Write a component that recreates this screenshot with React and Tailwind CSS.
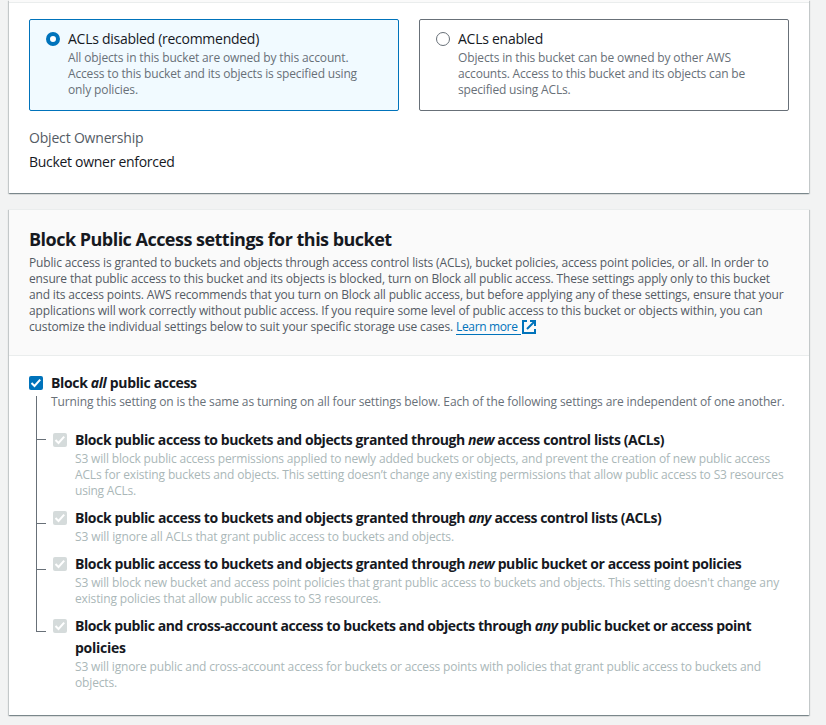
import React from "react";

// One line of copy with its own tracking.
function Line({ t = "tracking-[-0.15px]", children }) {
  return <span className={`block whitespace-nowrap ${t}`}>{children}</span>;
}

function Tile({ selected, title, titleTracking, children }) {
  return (
    <label
      className={`flex h-[92px] flex-1 gap-2 rounded-[2px] border px-4 pt-2 ${
        selected ? "border-[#0073bb] bg-[#f1faff]" : "border-[#687078] bg-white"
      }`}
    >
      {selected ? (
        <span className="mt-1 size-[14px] shrink-0 rounded-full border-4 border-[#0073bb] bg-white" />
      ) : (
        <span className="mt-1 size-[14px] shrink-0 rounded-full border border-[#687078] bg-white" />
      )}
      <span className="block">
        <span className={`block text-sm leading-[22px] font-medium whitespace-nowrap ${titleTracking}`}>{title}</span>
        <span className="block text-xs leading-4 text-[#687078]">{children}</span>
      </span>
    </label>
  );
}

function Check({ disabled }) {
  return (
    <svg viewBox="0 0 14 14" className="mt-1 size-[14px] shrink-0">
      <rect width="14" height="14" rx="2" fill={disabled ? "#d5dbdb" : "#0073bb"} />
      <path d="M2.5 7 5.5 10 11.2 3.6" fill="none" stroke="#fff" strokeWidth="2" />
    </svg>
  );
}

function Setting({ title, children }) {
  return (
    <div className="flex gap-2">
      <Check disabled />
      <div>
        <div className="text-sm leading-[22px] font-bold">{title}</div>
        <div className="text-xs leading-4 text-[#aab7b8]">{children}</div>
      </div>
    </div>
  );
}

const cardShadow =
  "shadow-[0_1px_1px_0_rgba(0,28,36,0.3),1px_1px_1px_0_rgba(0,28,36,0.15),-1px_1px_1px_0_rgba(0,28,36,0.15)]";

export default function App() {
  return (
    <div className="h-[725px] w-full overflow-hidden bg-[#f2f3f3] pr-[17px] pl-[9px] font-['Open_Sans',sans-serif] text-[#16191f]">
      <section className={`h-[193px] bg-white ${cardShadow}`}>
        <div className="h-[3px] border-b border-[#eaeded] bg-[#fafafa]" />
        <div className="px-5 pt-4">
          <div className="flex gap-5">
            <Tile selected title="ACLs disabled (recommended)" titleTracking="tracking-[-0.272px]">
              <Line t="tracking-[-0.139px]">All objects in this bucket are owned by this account.</Line>
              <Line t="tracking-[-0.159px]">Access to this bucket and its objects is specified using</Line>
              <Line t="tracking-[-0.125px]">only policies.</Line>
            </Tile>
            <Tile title="ACLs enabled" titleTracking="tracking-[-0.254px]">
              <Line t="tracking-[-0.14px]">Objects in this bucket can be owned by other AWS</Line>
              <Line t="tracking-[-0.177px]">accounts. Access to this bucket and its objects can be</Line>
              <Line t="tracking-[-0.178px]">specified using ACLs.</Line>
            </Tile>
          </div>
          <div className="mt-4 text-sm leading-[22px] tracking-[-0.185px] text-[#545b64]">Object Ownership</div>
          <div className="mt-0.5 text-sm leading-[22px] font-medium tracking-[-0.295px]">Bucket owner enforced</div>
        </div>
      </section>

      <section className={`mt-4 h-[506px] border-t border-[#eaeded] bg-white ${cardShadow}`}>
        <header className="h-[146px] border-b border-[#eaeded] bg-[#fafafa] px-5 pt-[18px]">
          <h2 className="text-lg leading-[22px] font-bold tracking-[-0.52px]">
            Block Public Access settings for this bucket
          </h2>
          <div className="mt-[5px] text-xs leading-4 text-[#545b64]">
            <Line t="tracking-[-0.159px]">
              Public access is granted to buckets and objects through access control lists (ACLs), bucket policies, access point policies, or all. In order to
            </Line>
            <Line t="tracking-[-0.142px]">
              ensure that public access to this bucket and its objects is blocked, turn on Block all public access. These settings apply only to this bucket
            </Line>
            <Line t="tracking-[-0.158px]">
              and its access points. AWS recommends that you turn on Block all public access, but before applying any of these settings, ensure that your
            </Line>
            <Line t="tracking-[-0.141px]">
              applications will work correctly without public access. If you require some level of public access to this bucket or objects within, you can
            </Line>
            <div className="flex">
              <Line t="tracking-[-0.141px]">customize the individual settings below to suit your specific storage use cases.</Line>
              <a className="ml-[3px] flex h-[16px] text-[#0073bb]">
                <span className="h-4 w-[65px] border-b border-[#0073bb] leading-4 whitespace-nowrap tracking-[-0.35px]">
                  Learn more
                </span>
                <svg viewBox="0 0 14 14" className="mt-px ml-px size-[14px]" fill="none" stroke="#0073bb" strokeWidth="2">
                  <path d="M5 1H1v12h12V9" />
                  <path d="M8 1h5v5M13 1 5 9" />
                </svg>
              </a>
            </div>
          </div>
        </header>

        <div className="px-5 pt-4">
          <div className="flex gap-2">
            <Check />
            <div>
              <div className="text-sm leading-[22px] font-bold tracking-[-0.34px]">
                Block <em>all</em> public access
              </div>
              <div className="text-xs leading-4 text-[#687078]">
                <Line t="tracking-[-0.121px]">
                  Turning this setting on is the same as turning on all four settings below. Each of the following settings are independent of one another.
                </Line>
              </div>
            </div>
          </div>

          <div className="-mt-3.5 flex pl-[7px]">
            <div className="w-[10px] shrink-0">
              <div className="h-[44px] border-b border-l border-[#687078]" />
              <div className="h-[84px] border-b border-l border-[#687078]" />
              <div className="h-[46px] border-b border-l border-[#687078]" />
              <div className="h-[62px] border-b border-l border-[#687078]" />
            </div>
            <div className="ml-[7px] flex flex-col gap-2 pt-[33px]">
              <Setting
                title={
                  <Line t="tracking-[-0.41px]">
                    Block public access to buckets and objects granted through <em>new</em> access control lists (ACLs)
                  </Line>
                }
              >
                <Line t="tracking-[-0.16px]">
                  S3 will block public access permissions applied to newly added buckets or objects, and prevent the creation of new public access
                </Line>
                <Line t="tracking-[-0.149px]">
                  ACLs for existing buckets and objects. This setting doesn’t change any existing permissions that allow public access to S3 resources
                </Line>
                <Line t="tracking-[-0.217px]">using ACLs.</Line>
              </Setting>
              <Setting
                title={
                  <Line t="tracking-[-0.405px]">
                    Block public access to buckets and objects granted through <em>any</em> access control lists (ACLs)
                  </Line>
                }
              >
                <Line t="tracking-[-0.11px]">S3 will ignore all ACLs that grant public access to buckets and objects.</Line>
              </Setting>
              <Setting
                title={
                  <Line t="tracking-[-0.405px]">
                    Block public access to buckets and objects granted through <em>new</em> public bucket or access point policies
                  </Line>
                }
              >
                <Line t="tracking-[-0.132px]">
                  S3 will block new bucket and access point policies that grant public access to buckets and objects. This setting doesn't change any
                </Line>
                <Line t="tracking-[-0.151px]">existing policies that allow public access to S3 resources.</Line>
              </Setting>
              <Setting
                title={
                  <>
                    <Line t="tracking-[-0.422px]">
                      Block public and cross-account access to buckets and objects through <em>any</em> public bucket or access point
                    </Line>
                    <Line t="tracking-[-0.25px]">policies</Line>
                  </>
                }
              >
                <Line t="tracking-[-0.161px]">
                  S3 will ignore public and cross-account access for buckets or access points with policies that grant public access to buckets and
                </Line>
                <Line t="tracking-[-0.154px]">objects.</Line>
              </Setting>
            </div>
          </div>
        </div>
      </section>
    </div>
  );
}
